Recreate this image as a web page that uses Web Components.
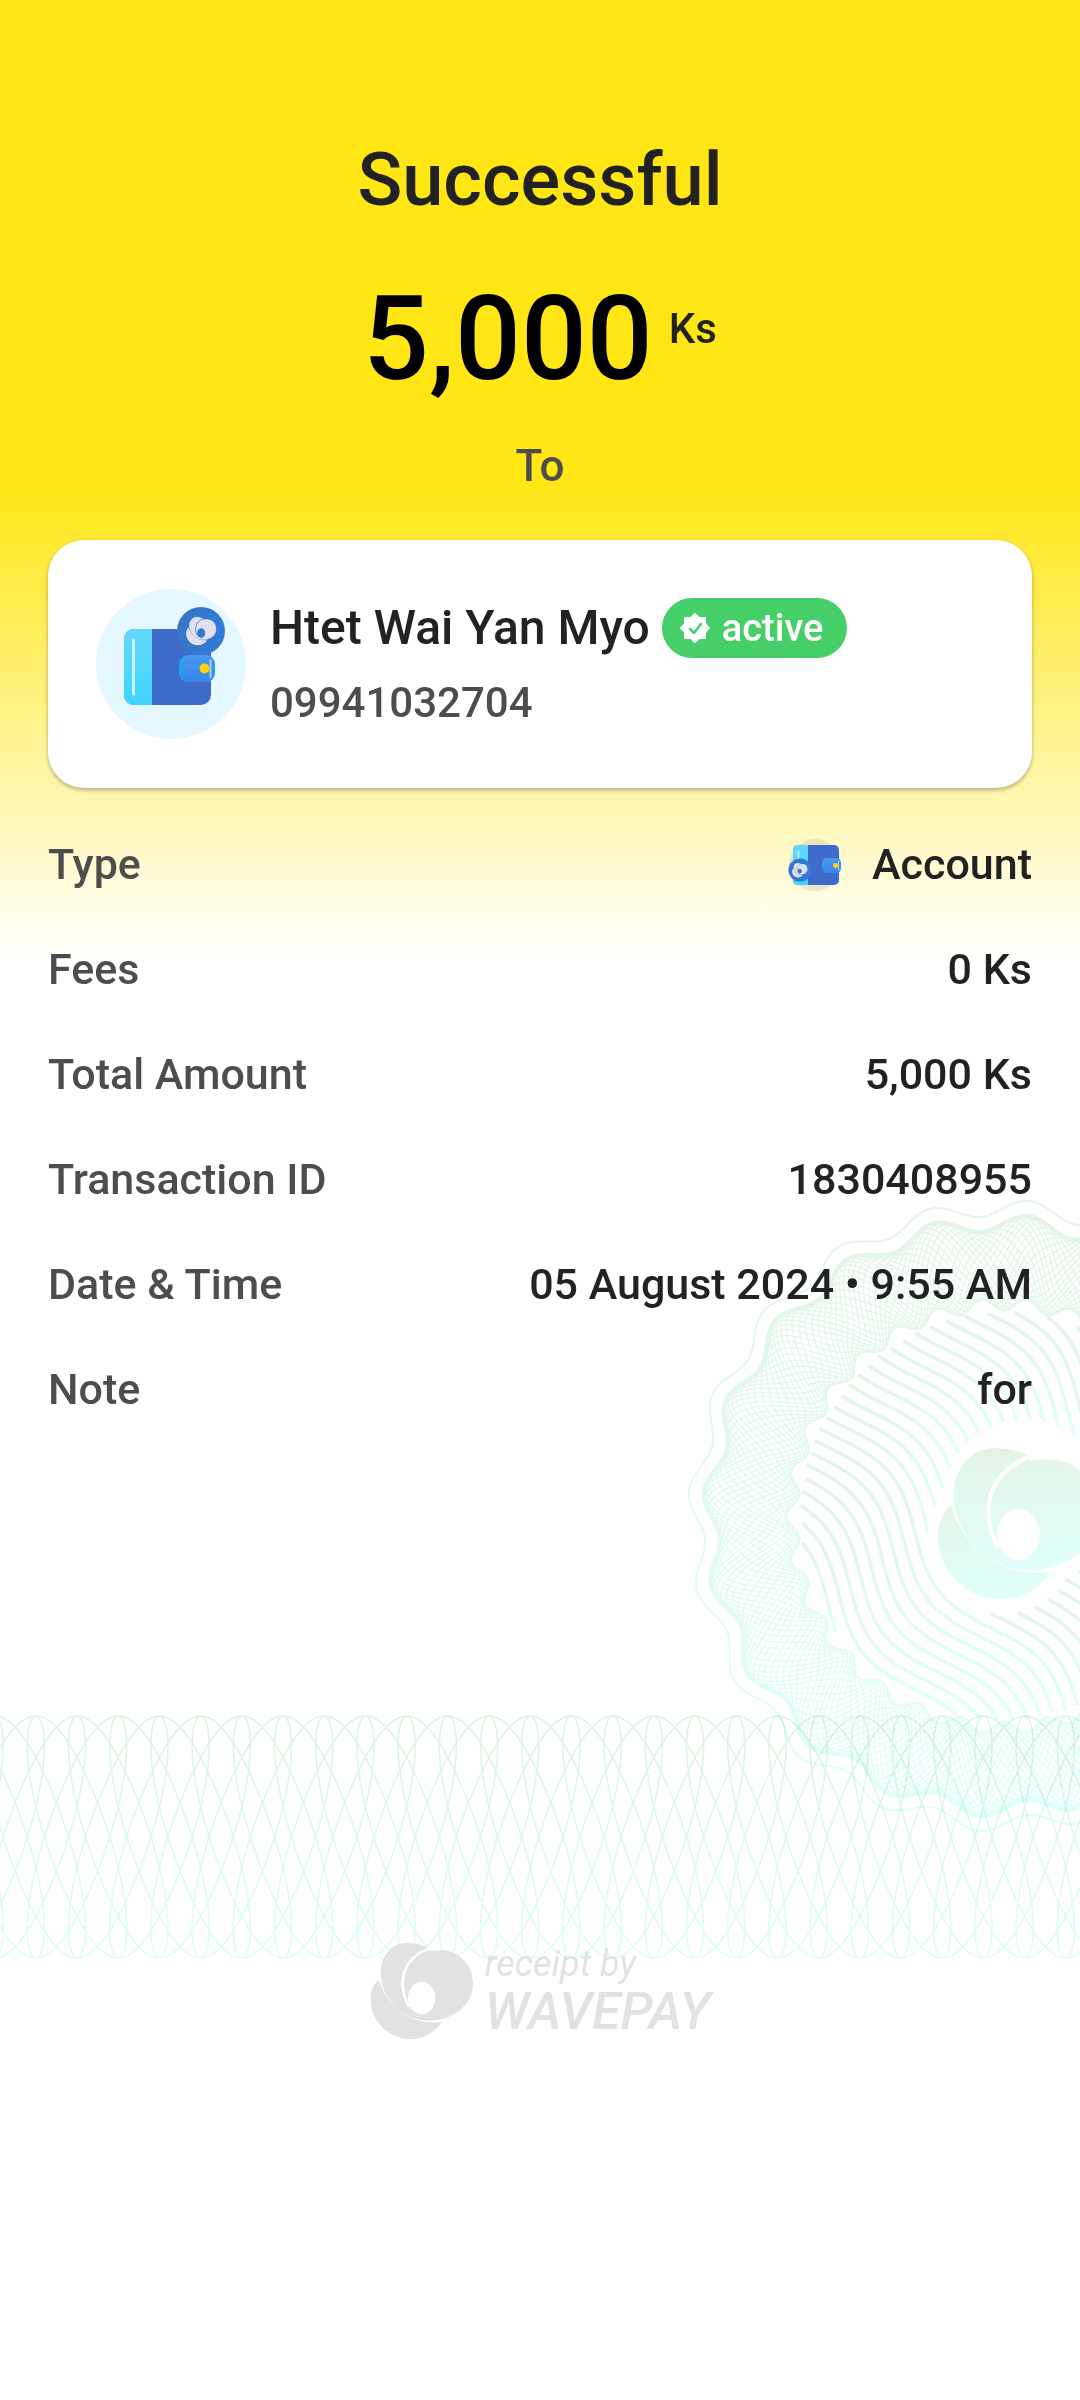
<!DOCTYPE html>
<html lang="en">
<head>
<meta charset="utf-8">
<meta name="viewport" content="width=device-width, initial-scale=1">
<title>Receipt</title>
<style>
    body {
        margin: 0;
        background: #fff;
        font-family: Roboto, "Liberation Sans", sans-serif;
        font-weight: 500;
        color: #222;
    }
</style>
</head>
<body>
<receipt-page>
    <guilloche-backdrop slot="backdrop"></guilloche-backdrop>
    <receipt-header amount="5,000" currency="Ks">Successful</receipt-header>
    <payee-card phone="09941032704" status="active">Htet Wai Yan Myo</payee-card>
    <receipt-details>
        <receipt-row label="Type"><wallet-icon small></wallet-icon>Account</receipt-row>
        <receipt-row label="Fees">0 Ks</receipt-row>
        <receipt-row label="Total Amount">5,000 Ks</receipt-row>
        <receipt-row label="Transaction ID">1830408955</receipt-row>
        <receipt-row label="Date &amp; Time">05 August 2024 • 9:55 AM</receipt-row>
        <receipt-row label="Note">for</receipt-row>
    </receipt-details>
    <receipt-brand slot="brand"></receipt-brand>
</receipt-page>

<script>
// Brand mark, drawn in a 309x288 box
const BODY = 'M177 15C150 2 125 0 105 0C65 2 32 40 32 88C32 165 95 233 175 233C250 233 309 185 309 122C309 60 262 22 212 22Q196 21 177 25Z';
const TAIL = 'M26 108C4 133 0 155 2 175C5 240 60 288 122 288C160 288 196 268 215 236C130 250 50 195 26 108Z';
const GAP = 'M184 14C124 34 98 75 98 122C98 150 105 170 118 192';

function mark(fill, hole) {
    return `
        <path d="${BODY}" fill="${fill}"/>
        <path d="${TAIL}" fill="${fill}"/>
        <path d="${GAP}" fill="none" stroke="${hole}" stroke-width="8"/>
        <ellipse cx="155" cy="165" rx="41" ry="49" fill="${hole}"/>`;
}

class ReceiptPage extends HTMLElement {
    constructor() {
        super();
        this.attachShadow({ mode: 'open' });
        this.shadowRoot.innerHTML = `
            <style>
                :host {
                    display: flex;
                    flex-direction: column;
                    position: relative;
                    overflow: hidden;
                    box-sizing: border-box;
                    min-height: 100vh;
                    padding: 136px 48px 48px;
                    background: linear-gradient(#ffe614 480px, #fff 960px);
                }
                main, footer { position: relative; }
                footer { margin-top: 525px; }
            </style>
            <slot name="backdrop"></slot>
            <main><slot></slot></main>
            <footer><slot name="brand"></slot></footer>
        `;
    }
}

class ReceiptHeader extends HTMLElement {
    constructor() {
        super();
        this.attachShadow({ mode: 'open' });
        this.shadowRoot.innerHTML = `
            <style>
                :host { display: block; text-align: center; }
                h1 { margin: 0 0 48px; font-size: 74px; line-height: 88px; font-weight: 500; }
                .amount {
                    display: flex;
                    justify-content: center;
                    gap: 16px;
                    font-size: 116px;
                    line-height: 134px;
                    color: #000;
                }
                .currency { margin-top: 28px; font-size: 42px; line-height: 57px; color: #222; }
                .to { margin: 32px 0 45px; font-size: 44px; line-height: 57px; color: #4d4d4d; }
            </style>
            <h1><slot></slot></h1>
            <div class="amount">
                <span>${this.getAttribute('amount')}</span>
                <span class="currency">${this.getAttribute('currency')}</span>
            </div>
            <div class="to">To</div>
        `;
    }
}

class WalletIcon extends HTMLElement {
    constructor() {
        super();
        this.attachShadow({ mode: 'open' });
        const small = this.hasAttribute('small');
        this.shadowRoot.innerHTML = `
            <style>
                :host { display: block; width: 150px; height: 150px; flex: none; }
                :host([small]) { width: 54px; height: 54px; }
                svg { display: block; width: 100%; height: 100%; }
            </style>
            ${small ? this.small() : this.large()}
        `;
    }

    defs() {
        return `
            <defs>
                <linearGradient id="flap" x2="0" y2="1"><stop stop-color="#62d8fa"/><stop offset="1" stop-color="#40d4ff"/></linearGradient>
                <linearGradient id="clasp" x2="0" y2="1"><stop stop-color="#4b98ef"/><stop offset="1" stop-color="#3886ec"/></linearGradient>
                <linearGradient id="coin" x2="1"><stop stop-color="#3775c8"/><stop offset="1" stop-color="#337bd8"/></linearGradient>
            </defs>`;
    }

    large() {
        return `
            <svg viewBox="0 0 150 150" aria-hidden="true">
                ${this.defs()}
                <circle cx="75" cy="75" r="75" fill="#e5f7ff"/>
                <rect x="28" y="40" width="87" height="76" rx="10" fill="#3e6bca"/>
                <path d="M56 40H38a10 10 0 0 0-10 10v56a10 10 0 0 0 10 10h18z" fill="url(#flap)"/>
                <path d="M37.500 51v54" stroke="#c9f3ff" stroke-width="3" stroke-linecap="round"/>
                <circle cx="105" cy="42" r="24" fill="url(#coin)"/>
                <g transform="translate(90 28) scale(.098)">${mark('#e4dfee', '#3578d0')}</g>
                <rect x="83" y="66" width="36" height="27" rx="9" fill="#16a5ee"/>
                <rect x="86" y="66" width="32" height="27" rx="8" fill="url(#clasp)"/>
                <path d="M114.500 71v17" stroke="#a5cdf7" stroke-width="2" stroke-linecap="round"/>
                <circle cx="108.500" cy="79.500" r="5" fill="#ffd400"/>
            </svg>`;
    }

    small() {
        return `
            <svg viewBox="0 0 54 54" aria-hidden="true">
                ${this.defs()}
                <circle cx="27" cy="27" r="26" fill="#000" fill-opacity=".08"/>
                <rect x="5" y="7" width="46" height="40" rx="5" fill="#3e6bca"/>
                <path d="M20 7H10a5 5 0 0 0-5 5v30a5 5 0 0 0 5 5h10z" fill="url(#flap)"/>
                <path d="M10.500 13v12" stroke="#c9f3ff" stroke-width="1.500"/>
                <circle cx="12" cy="32" r="11.500" fill="url(#coin)"/>
                <g transform="translate(4 25) scale(.05)">${mark('#e4dfee', '#3578d0')}</g>
                <rect x="34" y="20" width="19" height="15" rx="5" fill="#16a5ee"/>
                <rect x="35" y="20" width="17" height="15" rx="4" fill="url(#clasp)"/>
                <path d="M50.500 23v9" stroke="#a5cdf7"/>
                <circle cx="47.500" cy="27.500" r="2.500" fill="#ffd400"/>
            </svg>`;
    }
}

class StatusBadge extends HTMLElement {
    constructor() {
        super();
        this.attachShadow({ mode: 'open' });
        this.shadowRoot.innerHTML = `
            <style>
                :host {
                    display: flex;
                    align-items: center;
                    gap: 12px;
                    padding: 0 24px 0 18px;
                    border-radius: 30px;
                    background: #46cf68;
                    color: #fff;
                    font-size: 38px;
                    line-height: 60px;
                }
                svg { display: block; width: 30px; height: 30px; }
            </style>
            <svg viewBox="0 0 30 30" aria-hidden="true">
                <path fill="#fff" stroke="#fff" stroke-width="2" stroke-linejoin="round"
                    d="M15 1l4 4h6v6l4 4-4 4v6h-6l-4 4-4-4H5v-6l-4-4 4-4V5h6z"/>
                <path fill="none" stroke="#46cf68" stroke-width="2.500" stroke-linecap="round" stroke-linejoin="round" d="M10 16l4 4 7-9"/>
            </svg>
            <slot></slot>
        `;
    }
}

class PayeeCard extends HTMLElement {
    constructor() {
        super();
        this.attachShadow({ mode: 'open' });
        this.shadowRoot.innerHTML = `
            <style>
                :host {
                    display: flex;
                    align-items: center;
                    gap: 24px;
                    padding: 49px 48px;
                    border-radius: 36px;
                    background: #fff;
                    box-shadow: 0 2px 4px rgba(0, 0, 0, .3);
                }
                .name {
                    display: flex;
                    align-items: center;
                    gap: 12px;
                    margin-bottom: 16px;
                    font-size: 48px;
                    line-height: 60px;
                }
                .phone { font-size: 42px; line-height: 57px; color: #4d4d4d; }
            </style>
            <wallet-icon></wallet-icon>
            <div>
                <div class="name"><slot></slot><status-badge>${this.getAttribute('status')}</status-badge></div>
                <div class="phone">${this.getAttribute('phone')}</div>
            </div>
        `;
    }
}

class ReceiptDetails extends HTMLElement {
    constructor() {
        super();
        this.attachShadow({ mode: 'open' });
        this.shadowRoot.innerHTML = `
            <style>
                :host {
                    display: flex;
                    flex-direction: column;
                    gap: 48px;
                    margin-top: 48px;
                }
            </style>
            <slot></slot>
        `;
    }
}

class ReceiptRow extends HTMLElement {
    constructor() {
        super();
        this.attachShadow({ mode: 'open' });
        this.shadowRoot.innerHTML = `
            <style>
                :host {
                    display: flex;
                    justify-content: space-between;
                    font-size: 43px;
                    line-height: 57px;
                }
                .label { color: #4d4d4d; }
                .value { display: flex; align-items: center; gap: 30px; }
            </style>
            <span class="label">${this.getAttribute('label')}</span>
            <span class="value"><slot></slot></span>
        `;
    }
}

class ReceiptBrand extends HTMLElement {
    constructor() {
        super();
        this.attachShadow({ mode: 'open' });
        this.shadowRoot.innerHTML = `
            <style>
                :host {
                    display: flex;
                    justify-content: center;
                    gap: 12px;
                    color: #e2e2e2;
                    font-style: italic;
                }
                svg { display: block; width: 103px; height: 96px; }
                .by { font-size: 36px; line-height: 42px; font-weight: 400; }
                .name { font-size: 52px; line-height: 54px; }
            </style>
            <svg viewBox="0 0 309 288" aria-hidden="true">${mark('#e2e2e2', '#fff')}</svg>
            <div>
                <div class="by">receipt by</div>
                <div class="name">WAVEPAY</div>
            </div>
        `;
    }
}

class GuillocheBackdrop extends HTMLElement {
    constructor() {
        super();
        this.attachShadow({ mode: 'open' });
        this.shadowRoot.innerHTML = `
            <style>
                :host { display: block; position: absolute; inset: 0; }
                svg { position: absolute; display: block; overflow: visible; mix-blend-mode: multiply; }
                .rosette { width: 640px; height: 640px; top: 1196px; right: -244px; }
                .band { width: 1080px; height: 246px; top: 1714px; right: 0; }
            </style>
            <svg class="rosette" viewBox="-320 -320 640 640" fill="none" aria-hidden="true">
                <defs>
                    <linearGradient id="ring" gradientUnits="userSpaceOnUse" x1="0" y1="-316" x2="0" y2="316">
                        <stop stop-color="#e4f4e6"/><stop offset="1" stop-color="#e0fffc"/>
                    </linearGradient>
                    <linearGradient id="piece" x2="0" y2="1">
                        <stop stop-color="#e4f4e6"/><stop offset="1" stop-color="#e0fffc"/>
                    </linearGradient>
                </defs>
                <g stroke="url(#ring)">
                    <path stroke-width="2" d="${this.polar(a => this.lobes(a, 308))}"/>
                    <path stroke-width="4" d="${this.polar(a => this.lobes(a, 293))}"/>
                    <path stroke-width="1.300" d="${this.mesh()}"/>
                </g>
                ${this.waves()}
                <g transform="translate(-67 -68) scale(.525)">${mark('url(#piece)', '#fff')}</g>
            </svg>
            <svg class="band" viewBox="0 -123 1080 246" fill="none" aria-hidden="true">
                <defs>
                    <linearGradient id="fade" gradientUnits="userSpaceOnUse" x1="0" y1="-121" x2="0" y2="121">
                        <stop stop-color="#dcf3df"/><stop offset="1" stop-color="#d8fffb"/>
                    </linearGradient>
                </defs>
                <path stroke="url(#fade)" stroke-width="1.500" d="${this.band()}"/>
            </svg>
        `;
    }

    // Twenty soft lobes round the outer edge
    lobes(a, r) {
        return r + 8 * Math.cos(20 * (a - 0.0785));
    }

    polar(radius) {
        let d = '';
        for (let i = 0; i <= 1440; i++) {
            const a = i * Math.PI / 720;
            const r = radius(a);
            d += (i ? 'L' : 'M') + (r * Math.sin(a)).toFixed(1) + ' ' + (-r * Math.cos(a)).toFixed(1);
        }
        return d;
    }

    mesh() {
        let d = '';
        for (let j = 0; j < 24; j++) {
            const phase = j * Math.PI / 12;
            d += this.polar(a => {
                const outer = this.lobes(a, 292);
                const inner = 211 - 6 * Math.cos(30 * a);
                return (outer + inner) / 2 + (outer - inner) / 2 * Math.cos(10 * a + phase);
            });
        }
        return d;
    }

    // Diagonal wavy lines, cut where they meet the ring or the mark
    waves() {
        let out = '';
        for (let v = -220; v <= 220; v += 14) {
            let points = [];
            for (let u = -220; u <= 224; u += 2) {
                const w = v + 18 * Math.sin((u - 80) * 2 * Math.PI / 245);
                const x = u * 0.628 + w * 0.777;
                const y = u * 0.777 - w * 0.628;
                const inMark = Math.hypot(x - 22, y + 12) < 84 || Math.hypot(x + 2, y - 24) < 74;
                const visible = Math.hypot(x, y) < 204 && !inMark && u < 222;
                if (visible) {
                    points.push(x.toFixed(1) + ' ' + y.toFixed(1));
                } else if (points.length) {
                    if (points.length > 4) out += `<path d="M${points.join('L')}"/>`;
                    points = [];
                }
            }
        }
        return `<g stroke="url(#piece)" stroke-width="3.500">${out}</g>`;
    }

    // Looping curves in eight strands: four, and their mirror images
    band() {
        let d = '';
        for (const side of [1, -1]) {
            for (let strand = 0; strand < 4; strand++) {
                for (let i = -40; i <= 700; i++) {
                    const t = i * Math.PI / 40;
                    const x = 36 + strand * 41.2 - 165 + 26.23 * t + 32.7 * Math.sin(t) - 5.9 * Math.sin(2 * t);
                    const y = -side * 121 * Math.cos(t);
                    d += (i > -40 ? 'L' : 'M') + x.toFixed(1) + ' ' + y.toFixed(1);
                }
            }
        }
        return d;
    }
}

customElements.define('wallet-icon', WalletIcon);
customElements.define('status-badge', StatusBadge);
customElements.define('guilloche-backdrop', GuillocheBackdrop);
customElements.define('receipt-header', ReceiptHeader);
customElements.define('payee-card', PayeeCard);
customElements.define('receipt-row', ReceiptRow);
customElements.define('receipt-details', ReceiptDetails);
customElements.define('receipt-brand', ReceiptBrand);
customElements.define('receipt-page', ReceiptPage);
</script>
</body>
</html>
